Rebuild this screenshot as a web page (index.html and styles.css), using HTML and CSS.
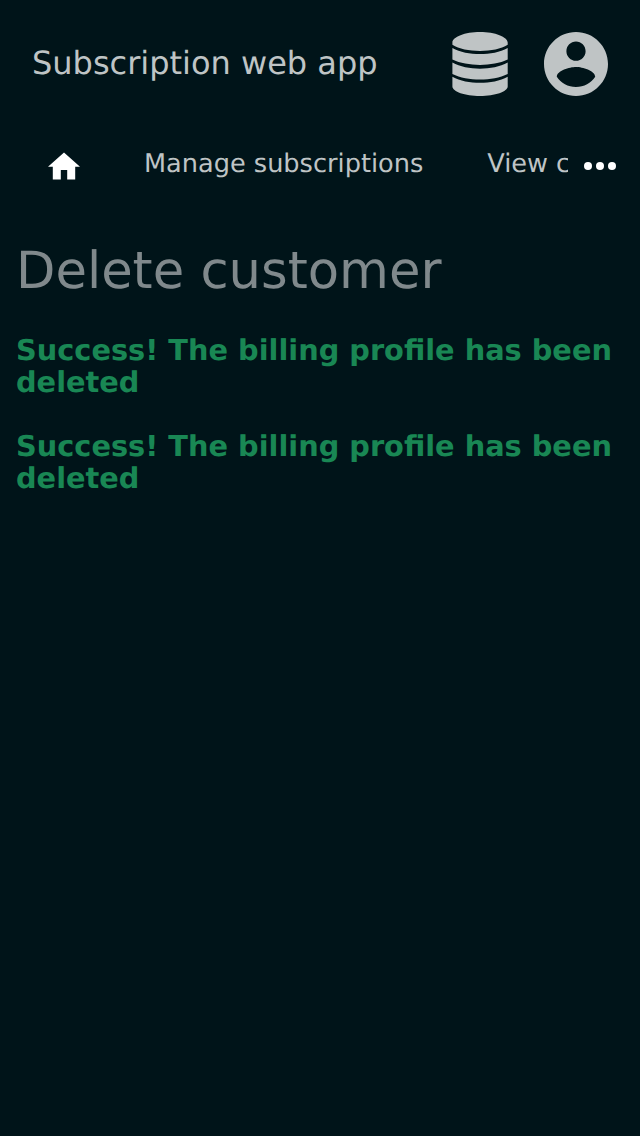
FILE: index.html
```html
<!DOCTYPE html>
<html lang="en">
<head>
<meta charset="utf-8">
<title>Subscription web app</title>
<link rel="stylesheet" href="styles.css">
</head>
<body>
<header class="header">
  <div class="brand">Subscription web app</div>
  <svg class="icon-db" viewBox="0 0 56 64"><path d="M.4 10.500C.4 5 13 0 28 0s27.700 5 27.700 10.500v2.200C49 17 39 18.900 28 18.900S7 17 .4 12.700zM.4 15.900C8 20.300 18 22 28 22s20-1.700 27.700-6.100v11.700C48 31.300 38 32.900 28 32.900S8 31.300.4 27.600zM.4 30.600C8 35 18 36.700 28 36.700s20-1.700 27.700-6.100v11.400C48 45.900 38 47.500 28 47.500S8 45.900.4 42zM.4 44.700C8 49.100 18 50.800 28 50.800s20-1.700 27.700-6.100V54.500C55.700 59.500 43 64 28 64S.4 59.500.4 54.500z"/></svg>
  <svg class="icon-user" viewBox="2 2 20 20"><path d="M12 2C6.480 2 2 6.480 2 12s4.480 10 10 10 10-4.480 10-10S17.520 2 12 2zm0 3c1.660 0 3 1.340 3 3s-1.340 3-3 3-3-1.340-3-3 1.340-3 3-3zm0 14.200c-2.500 0-4.710-1.280-6-3.220.03-1.990 4-3.080 6-3.080 1.990 0 5.970 1.090 6 3.080-1.290 1.940-3.500 3.220-6 3.220z"/></svg>
</header>
<nav class="nav">
  <div class="tabs">
    <a class="home"><svg viewBox="2 3 20 17"><path d="M10 20v-6h4v6h5v-8h3L12 3 2 12h3v8z"/></svg></a>
    <a class="tab">Manage subscriptions</a>
    <a class="tab">View customers</a>
  </div>
  <svg class="more" viewBox="0 0 32 8"><circle cx="4" cy="4" r="4"/><circle cx="16" cy="4" r="4"/><circle cx="28" cy="4" r="4"/></svg>
</nav>
<main class="main">
  <h1>Delete customer</h1>
  <p>Success! The billing profile has been deleted</p>
  <p>Success! The billing profile has been deleted</p>
</main>
</body>
</html>
```
FILE: styles.css
```css
body { margin: 0; min-height: 1136px; background: #001419; color: #bfc4c5; font-family: "DejaVu Sans", sans-serif; text-rendering: geometricPrecision; }
.header { display: flex; align-items: center; height: 128px; padding: 0 32px; box-sizing: border-box; }
.brand { flex: 1; font-size: 32px; white-space: nowrap; padding-bottom: 2px; }
.header svg { fill: #bfc4c5; }
.icon-db { width: 56px; height: 64px; margin-right: 36px; }
.icon-user { width: 64px; height: 64px; }
.nav { display: flex; align-items: center; height: 76px; padding-right: 24px; box-sizing: border-box; }
.tabs { flex: 1; display: flex; align-items: center; gap: 64px; padding-left: 48px; min-width: 0; overflow: hidden; margin-right: 16px; }
.home svg { display: block; width: 32px; height: 28px; fill: #fff; }
.tab { flex: none; font-size: 25.6px; line-height: 32px; white-space: nowrap; padding-bottom: 4px; }
.more { width: 32px; height: 8px; fill: #fff; }
.main { padding: 35px 16px 0; }
h1 { margin: 0; font-size: 51.2px; font-weight: 400; line-height: 64px; color: #80898c; }
p { margin: 31px 0 32px; font-size: 28.8px; font-weight: 700; line-height: 32px; color: #198754; }
```
